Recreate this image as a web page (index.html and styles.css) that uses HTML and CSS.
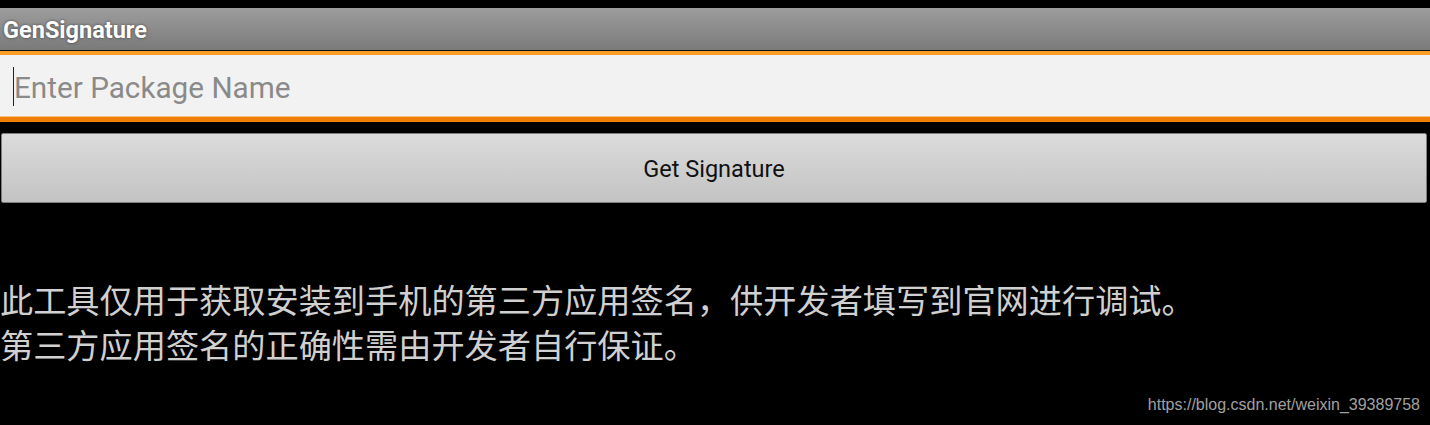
FILE: index.html
```html
<!DOCTYPE html>
<html lang="zh">
<head>
<meta charset="utf-8">
<title>GenSignature</title>
<link rel="stylesheet" href="styles.css">
</head>
<body>
<div class="screen">
  <div class="status"></div>
  <div class="titlebar"><span class="title">GenSignature</span></div>
  <div class="field">
    <span class="cursor"></span><span class="placeholder">Enter Package Name</span>
  </div>
  <div class="btnwrap">
    <div class="button">Get Signature</div>
  </div>
  <div class="notice">
    <p>此工具仅用于获取安装到手机的第三方应用签名，供开发者填写到官网进行调试。</p>
    <p>第三方应用签名的正确性需由开发者自行保证。</p>
  </div>
  <div class="watermark">https://blog.csdn.net/weixin_39389758</div>
</div>
</body>
</html>
```
FILE: styles.css
```css
html, body {
  margin: 0;
  padding: 0;
  background: #000;
}
.screen {
  position: relative;
  width: 1430px;
  height: 425px;
  overflow: hidden;
  background: #000;
  font-family: Roboto, "Noto Sans", sans-serif;
}
.status {
  height: 8px;
}
.titlebar {
  height: 42px;
  background: linear-gradient(#9d9d9d, #7a7a7a);
  border-bottom: 1px solid #111;
  display: flex;
  align-items: center;
  padding-left: 3px;
}
.title {
  color: #fff;
  font-weight: bold;
  font-size: 23.5px;
  letter-spacing: 0;
  text-shadow: 0 0 3px rgba(0,0,0,0.55);
  margin-top: 1px;
}
.field {
  height: 62px;
  background: #f2f2f2;
  border-top: 4px solid #fa9e28;
  border-bottom: 5px solid #f07f08;
  box-shadow: inset 0 -1px 0 #f7c080;
  display: flex;
  align-items: center;
  padding-left: 13px;
}
.cursor {
  width: 1px;
  height: 39px;
  background: #222;
}
.placeholder {
  color: #8a8a8a;
  font-size: 29.7px;
  margin-top: 2px;
}
.btnwrap {
  padding: 11px 3px 0 1px;
}
.button {
  height: 66px;
  border: 1px solid #7d7d7d;
  border-radius: 2px;
  background: linear-gradient(#dbdbdb, #c3c3c3);
  display: flex;
  align-items: center;
  justify-content: center;
  color: #111;
  font-size: 23.5px;
  padding-top: 2px;
}
.notice {
  margin-top: 73px;
  color: #d0d0d0;
  font-family: "Noto Sans CJK SC", "Noto Sans", sans-serif;
  font-size: 33.2px;
  line-height: 45px;
}
.notice p {
  margin: 0;
  white-space: nowrap;
}
.watermark {
  position: absolute;
  right: 10px;
  top: 395px;
  color: #a0a0a0;
  font-family: "Liberation Sans", Arial, sans-serif;
  font-size: 16px;
  line-height: 20px;
}
```
